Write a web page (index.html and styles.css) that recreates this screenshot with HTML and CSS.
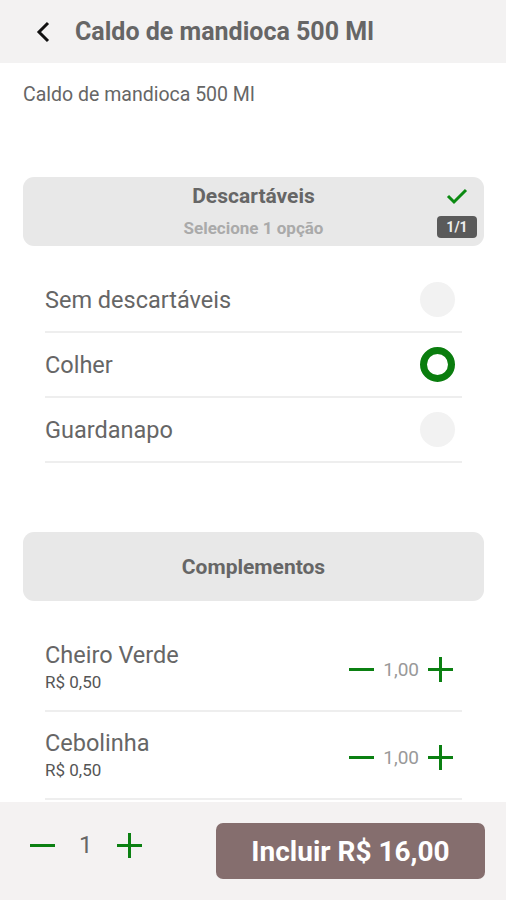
FILE: index.html
```html
<!DOCTYPE html>
<html lang="pt-BR">
<head>
    <meta charset="UTF-8">
    <meta name="viewport" content="width=device-width, initial-scale=1.0">
    <title>Caldo de mandioca 500 Ml</title>
    <link rel="stylesheet" href="styles.css">
</head>
<body>
    <header class="topbar">
        <button class="back" aria-label="Voltar">
            <svg width="18" height="22" viewBox="0 0 18 22"><polyline points="13,2 4,11 13,20" fill="none" stroke="#111" stroke-width="3"/></svg>
        </button>
        <h1>Caldo de mandioca 500 Ml</h1>
    </header>

    <main class="content">
        <p class="description">Caldo de mandioca 500 Ml</p>

        <section class="group">
            <div class="group-head">
                <div class="group-title">Descartáveis</div>
                <div class="group-sub">Selecione 1 opção</div>
                <div class="group-status">
                    <svg width="22" height="18" viewBox="0 0 22 18"><polyline points="2,9 8,15 20,3" fill="none" stroke="#0b8a12" stroke-width="3"/></svg>
                    <span class="badge">1/1</span>
                </div>
            </div>
            <ul class="options">
                <li class="option"><span>Sem descartáveis</span><span class="radio"></span></li>
                <li class="option"><span>Colher</span><span class="radio checked"></span></li>
                <li class="option"><span>Guardanapo</span><span class="radio"></span></li>
            </ul>
        </section>

        <section class="group">
            <div class="group-head simple">
                <div class="group-title">Complementos</div>
            </div>
            <ul class="items">
                <li class="item">
                    <div>
                        <div class="item-name">Cheiro Verde</div>
                        <div class="item-price">R$ 0,50</div>
                    </div>
                    <div class="stepper">
                        <span class="minus"></span>
                        <span class="qty">1,00</span>
                        <span class="plus"></span>
                    </div>
                </li>
                <li class="item">
                    <div>
                        <div class="item-name">Cebolinha</div>
                        <div class="item-price">R$ 0,50</div>
                    </div>
                    <div class="stepper">
                        <span class="minus"></span>
                        <span class="qty">1,00</span>
                        <span class="plus"></span>
                    </div>
                </li>
            </ul>
        </section>
    </main>

    <footer class="bottombar">
        <div class="stepper big">
            <span class="minus"></span>
            <span class="qty">1</span>
            <span class="plus"></span>
        </div>
        <button class="include">Incluir R$ 16,00</button>
    </footer>
</body>
</html>
```

FILE: styles.css
```css
* {
    box-sizing: border-box;
}
body {
    margin: 0;
    height: 100vh;
    display: flex;
    flex-direction: column;
    font-family: Roboto, "Liberation Sans", Arial, sans-serif;
    color: #666;
    background-color: #fff;
}
.topbar {
    flex: none;
    height: 63px;
    display: flex;
    align-items: center;
    padding-left: 35px;
    background-color: #f3f2f2;
}
.back {
    border: none;
    background: none;
    padding: 0;
    display: flex;
    margin-right: 22px;
}
.topbar h1 {
    margin: 0;
    font-size: 25px;
    font-weight: 700;
    color: #666;
}
.content {
    flex: 1;
    overflow: hidden;
    padding: 0 22px 0 23px;
}
.description {
    margin: 21px 0 0;
    font-size: 19.5px;
    line-height: 22px;
}
.group {
    margin-top: 71px;
}
.group + .group {
    margin-top: 69px;
}
.group-head {
    position: relative;
    height: 69px;
    border-radius: 11px;
    background-color: #e8e8e8;
    text-align: center;
    padding-top: 7px;
}
.group-title {
    font-size: 21px;
    font-weight: 700;
    line-height: 24px;
    color: #666;
}
.group-sub {
    margin-top: 10px;
    font-size: 17px;
    font-weight: 700;
    line-height: 20px;
    color: #aaa;
}
.group-head.simple {
    display: flex;
    align-items: center;
    justify-content: center;
    padding-top: 0;
}
.group-status {
    position: absolute;
    right: 7px;
    top: 10px;
    display: flex;
    flex-direction: column;
    align-items: center;
    gap: 11px;
}
.badge {
    min-width: 40px;
    padding: 3px 0;
    border-radius: 4px;
    background-color: #5a5a5a;
    color: #eee;
    font-size: 14px;
    font-weight: 700;
    line-height: 16px;
}
.options, .items {
    list-style: none;
    margin: 0;
    padding: 0 22px;
}
.options {
    margin-top: 22px;
}
.option {
    height: 65px;
    display: flex;
    align-items: center;
    justify-content: space-between;
    padding-right: 7px;
    border-bottom: 2px solid #eee;
    font-size: 23.5px;
}
.radio {
    width: 35px;
    height: 35px;
    border-radius: 50%;
    background-color: #f2f2f2;
}
.radio.checked {
    background-color: #fff;
    border: 7px solid #0a7d0e;
}
.items {
    margin-top: 23px;
}
.item {
    height: 88px;
    display: flex;
    align-items: center;
    justify-content: space-between;
    padding-right: 9px;
    border-bottom: 2px solid #eee;
}
.item-name {
    font-size: 23.5px;
    line-height: 26px;
}
.item-price {
    margin-top: 4px;
    font-size: 17px;
    line-height: 20px;
    color: #555;
}
.stepper {
    display: flex;
    align-items: center;
    gap: 9px;
    margin-top: 4px;
}
.qty {
    font-size: 19px;
    color: #999;
}
.minus, .plus {
    position: relative;
    width: 25px;
    height: 25px;
}
.minus::before, .plus::before, .plus::after {
    content: "";
    position: absolute;
    background-color: #0b8012;
}
.minus::before, .plus::before {
    left: 0;
    right: 0;
    top: 11px;
    height: 3px;
}
.plus::after {
    top: 0;
    bottom: 0;
    left: 11px;
    width: 3px;
}
.bottombar {
    flex: none;
    height: 98px;
    display: flex;
    align-items: center;
    justify-content: space-between;
    padding: 0 21px 0 30px;
    background-color: #f4f2f2;
}
.stepper.big {
    gap: 24px;
    margin: 0 0 12px;
}
.stepper.big .qty {
    font-size: 24px;
    color: #666;
}
.include {
    width: 269px;
    height: 56px;
    border: none;
    border-radius: 7px;
    background-color: #856e6e;
    color: #fff;
    font-family: inherit;
    font-size: 28px;
    font-weight: 700;
}
```
